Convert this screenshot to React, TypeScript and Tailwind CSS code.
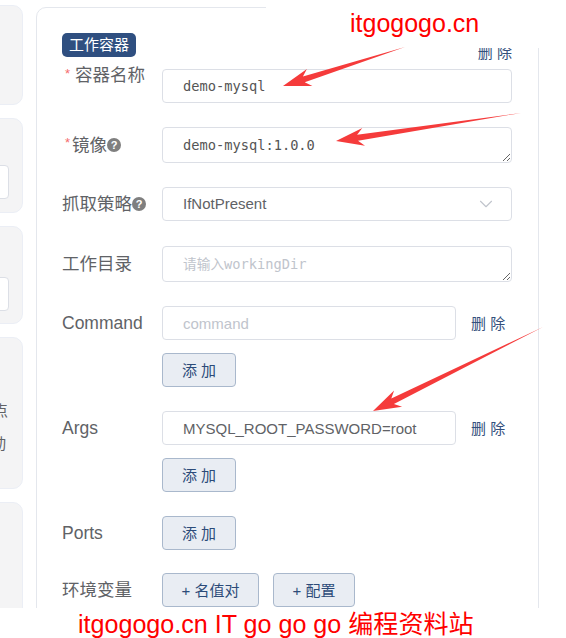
import { ChevronDown } from "lucide-react";

function arrowPoints(tx: number, ty: number, px: number, py: number, headLen = 28, headW = 9, shaftW = 3) {
  const dx = px - tx;
  const dy = py - ty;
  const len = Math.hypot(dx, dy);
  const ux = dx / len;
  const uy = dy / len;
  const nx = -uy;
  const ny = ux;
  const bx = px - ux * headLen;
  const by = py - uy * headLen;
  const sx = px - ux * headLen * 0.78;
  const sy = py - uy * headLen * 0.78;
  const pts = [
    [tx, ty],
    [sx + nx * shaftW, sy + ny * shaftW],
    [bx + nx * headW, by + ny * headW],
    [px, py],
    [bx - nx * headW, by - ny * headW],
    [sx - nx * shaftW, sy - ny * shaftW],
  ];
  return pts.map((p) => `${p[0].toFixed(1)},${p[1].toFixed(1)}`).join(" ");
}

function Help() {
  return (
    <span className="inline-flex w-[14px] h-[14px] rounded-full bg-[#7f7f7f] text-white text-[11px] font-bold leading-none items-center justify-center font-['Liberation_Sans',sans-serif]">
      ?
    </span>
  );
}

function Req({ cls }: { cls: string }) {
  return <span className={`relative text-[#f56c6c] text-[13px] leading-none ${cls}`}>*</span>;
}

function AddBtn({ children, w }: { children: React.ReactNode; w: string }) {
  return (
    <div
      className={`${w} h-[34px] shrink-0 rounded-[4px] border border-[#a9b8cc] bg-[#e9edf3] text-[15px] text-[#2c4b79] flex items-center justify-center leading-none`}
    >
      {children}
    </div>
  );
}

function Del() {
  return <span className="text-[15px] text-[#34507c] leading-none whitespace-pre">删 除</span>;
}

export default function App() {
  const sans = "font-['Liberation_Sans','Noto_Sans_CJK_SC',sans-serif]";
  const mono = "font-['DejaVu_Sans_Mono','Noto_Sans_CJK_SC',monospace]";
  const inputBox = "h-[34px] rounded-[4px] border border-[#dcdfe6] bg-white px-[20px] outline-none";
  const label = "w-[100px] shrink-0 text-[17.5px] text-[#606266] leading-[20px] flex items-center";

  return (
    <div className={`relative w-[566px] h-[638px] overflow-hidden bg-white ${sans}`}>
      <div className="flex items-start pt-[5px]">
        {/* left cropped column */}
        <div className="w-[23px] shrink-0 overflow-hidden flex flex-col gap-[13px]">
          <div className="ml-[-177px] w-[200px] h-[100px] rounded-[10px] bg-[#f4f4f5] border border-[#ebeef5]" />
          <div className="ml-[-177px] w-[200px] h-[95px] rounded-[10px] bg-[#f4f4f5] border border-[#ebeef5] pt-[46px] pr-[13px]">
            <div className="h-[34px] rounded-[4px] border border-[#dcdfe6] bg-white" />
          </div>
          <div className="ml-[-177px] w-[200px] h-[98px] rounded-[10px] bg-[#f4f4f5] border border-[#ebeef5] pt-[50px] pr-[13px]">
            <div className="h-[34px] rounded-[4px] border border-[#dcdfe6] bg-white" />
          </div>
          <div className="ml-[-177px] w-[200px] h-[152px] rounded-[10px] bg-[#f4f4f5] border border-[#ebeef5] pt-[63px] pr-[14px] flex flex-col items-end gap-[14px] text-[15px] text-[#606266] leading-[19px]">
            <span>选择节点</span>
            <span className="mr-[2px]">自动</span>
          </div>
          <div className="ml-[-177px] w-[200px] h-[140px] rounded-[10px] bg-[#f4f4f5] border border-[#ebeef5]" />
        </div>

        {/* main card */}
        <div className="ml-[13px] mt-[2px] w-[503px] h-[640px] shrink-0 rounded-[10px] border border-[#e4e7ed] bg-white pt-[25px] pl-[25px] pr-[26px]">
          <div className="flex justify-between items-start">
            <span className="h-[24px] px-[7px] rounded-[5px] bg-[#2f4f80] text-white text-[15px] leading-[24px]">工作容器</span>
            <span className="mt-[12px] leading-[16px] flex"><Del /></span>
          </div>

          {/* 容器名称 */}
          <div className="flex items-start mt-[9px]">
            <div className={`${label} -mt-[4px] pl-[3px]`}>
              <Req cls="top-[-2px] mr-[5px]" />
              <span>容器名称</span>
            </div>
            <input
              readOnly
              value="demo-mysql"
              className={`${inputBox} flex-1 min-w-0 ${mono} text-[13.7px] text-[#555]`}
            />
          </div>

          {/* 镜像 */}
          <div className="flex items-start mt-[24px]">
            <div className={`${label} h-[36px] pl-[3px]`}>
              <Req cls="top-[-3px] mr-[2px]" />
              <span>镜像</span>
              <Help />
            </div>
            <textarea
              readOnly
              value="demo-mysql:1.0.0"
              className={`flex-1 min-w-0 h-[36px] rounded-[4px] border border-[#dcdfe6] bg-white px-[20px] py-[7px] leading-[20px] overflow-hidden outline-none ${mono} text-[13.7px] text-[#555]`}
            />
          </div>

          {/* 抓取策略 */}
          <div className="flex items-start mt-[24px]">
            <div className={`${label} h-[34px]`}>
              <span>抓取策略</span>
              <Help />
            </div>
            <div className={`${inputBox} flex-1 min-w-0 flex items-center justify-between pr-[14px]`}>
              <span className="text-[15px] text-[#606266]">IfNotPresent</span>
              <ChevronDown size={22} strokeWidth={1.2} color="#c0c4cc" />
            </div>
          </div>

          {/* 工作目录 */}
          <div className="flex items-start mt-[25px]">
            <div className={`${label} h-[36px]`}>
              <span>工作目录</span>
            </div>
            <textarea
              readOnly
              placeholder="请输入workingDir"
              className={`flex-1 min-w-0 h-[36px] rounded-[4px] border border-[#dcdfe6] bg-white px-[20px] py-[7px] leading-[20px] overflow-hidden outline-none ${mono} text-[13.7px] text-[#555] placeholder:text-[#c0c4cc]`}
            />
          </div>

          {/* Command */}
          <div className="flex items-start mt-[24px]">
            <div className={`${label} h-[34px]`}>
              <span>Command</span>
            </div>
            <div className="flex flex-col gap-[13px]">
              <div className="flex items-center">
                <input
                  readOnly
                  placeholder="command"
                  className={`${inputBox} w-[294px] text-[15px] text-[#606266] placeholder:text-[#c0c4cc]`}
                />
                <span className="ml-[15px] flex"><Del /></span>
              </div>
              <AddBtn w="w-[74px]">添 加</AddBtn>
            </div>
          </div>

          {/* Args */}
          <div className="flex items-start mt-[24px]">
            <div className={`${label} h-[34px]`}>
              <span>Args</span>
            </div>
            <div className="flex flex-col gap-[13px]">
              <div className="flex items-center">
                <input
                  readOnly
                  value="MYSQL_ROOT_PASSWORD=root"
                  className={`${inputBox} w-[294px] text-[15px] text-[#606266]`}
                />
                <span className="ml-[15px] flex"><Del /></span>
              </div>
              <AddBtn w="w-[74px]">添 加</AddBtn>
            </div>
          </div>

          {/* Ports */}
          <div className="flex items-start mt-[24px]">
            <div className={`${label} h-[34px]`}>
              <span>Ports</span>
            </div>
            <AddBtn w="w-[74px]">添 加</AddBtn>
          </div>

          {/* 环境变量 */}
          <div className="flex items-start mt-[23px]">
            <div className={`${label} h-[34px]`}>
              <span>环境变量</span>
            </div>
            <div className="flex gap-[14px]">
              <AddBtn w="w-[97px]">+ 名值对</AddBtn>
              <AddBtn w="w-[82px]">+ 配置</AddBtn>
            </div>
          </div>
        </div>
      </div>

      {/* watermark overlays */}
      <div className="absolute left-[266px] top-0 w-[300px] h-[48px] bg-white">
        <span className="absolute left-[84px] top-[9px] text-[25px] leading-[28px] text-[#ff0000]">itgogogo.cn</span>
      </div>
      <div className="absolute left-0 top-[608px] w-[566px] h-[30px] bg-white">
        <span className="absolute left-[78px] top-[2px] text-[25.1px] leading-[28px] text-[#ff0000] whitespace-pre">
          itgogogo.cn IT go go go 编程资料站
        </span>
      </div>
      <svg className="absolute left-0 top-0 pointer-events-none" width="566" height="638">
        <polygon points={arrowPoints(405, 47, 283, 86)} fill="#f53b3b" />
        <polygon points={arrowPoints(521, 113, 336, 141)} fill="#f53b3b" />
        <polygon points={arrowPoints(543, 327, 373, 411)} fill="#f53b3b" />
      </svg>
    </div>
  );
}
